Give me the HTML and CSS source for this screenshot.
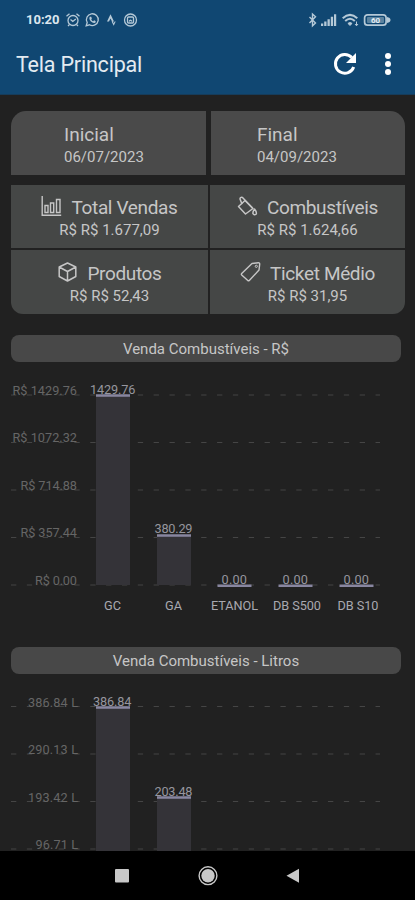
FILE: index.html
```
<!DOCTYPE html>
<html lang="pt-BR">
<head>
    <meta charset="utf-8">
    <meta name="viewport" content="width=device-width, initial-scale=1.0">
    <title>Tela Principal</title>
    <link rel="stylesheet" href="styles.css">
</head>
<body>
<header class="header">
    <div class="status">
        <span class="clock">10:20</span>
        <svg class="status-left" width="74" height="16" viewBox="0 0 74 16">
            <g fill="none" stroke="currentColor" stroke-width="1.3">
                <circle cx="8" cy="8.5" r="5"/>
                <path d="M5.5 7.5l2.3 2 3-2.4M1.5 4.3l3-2.5M11.5 1.8l3 2.5M4.5 12.5L3 14M11.5 12.5L13 14"/>
                <path d="M21.2 13.8l1-3.3a5.9 5.9 0 1 1 2.3 2.3z"/>
                <circle cx="65.5" cy="8" r="6"/>
                <rect x="62.5" y="5" width="6" height="6" rx="1"/>
                <path d="M64 9.500q1.500-2.500 3 0"/>
            </g>
            <path fill="currentColor" d="M25 4.8c-1.7 1.2.3 6 4.4 6.2 1.2 0 1.8-1.5 1-2l-1.3-.7-.9.9c-1-.4-1.7-1.2-2-2l.7-.8-.7-1.6zM42 9.5l3.5-7.2 3.5 7.2h-2l-1.5-3-1.5 3zM46.6 9.5h1.2l.9 1.8.9-1.8h1.1l-2 4.2z"/>
        </svg>
        <svg class="status-right" width="86" height="16" viewBox="0 0 86 16">
            <path fill="none" stroke="currentColor" stroke-width="1.4" d="M3.500 5l6 6-3 2.8V2l3 2.8-6 6.2"/>
            <path fill="currentColor" d="M15 11.5h2.2V14H15zM18.200 9.5h2.3V14h-2.3zM21.500 7.2h2.3V14h-2.3zM24.800 4.8h2.3V14h-2.3zM28 2.3h2.2V14H28z"/>
            <g fill="none" stroke="currentColor" stroke-width="2">
                <path d="M36.7 6.2q7.3-6.6 14.6 0M39.2 8.9q4.8-4.4 9.6 0"/>
                <path d="M41.9 11.4q2.1-1.7 4.2 0L44 13.4z" fill="currentColor" stroke-width="1"/>
                <path d="M50.500 9.500v4M49 12l1.5 1.8L52 12" stroke-width="1"/>
                <rect x="58.6" y="2.8" width="21.500" height="10.4" rx="3" stroke-width="1.7"/>
            </g>
            <rect x="61" y="5" width="17" height="6" rx="1" fill="currentColor" opacity=".45"/>
            <path fill="currentColor" d="M81 5q3.500.7 3.500 3T81 11z"/>
            <text class="battery" x="69.500" y="10.8" text-anchor="middle">60</text>
        </svg>
    </div>
    <div class="appbar">
        <h1>Tela Principal</h1>
        <svg width="24" height="24" viewBox="0 0 24 24">
            <path fill="none" stroke="currentColor" stroke-width="3" d="M20.7 15a9.4 9.4 0 1 1-1.9-9.5"/>
            <path fill="currentColor" d="M23 1v10H13z"/>
        </svg>
        <svg class="menu" width="8" height="24" viewBox="0 0 8 24">
            <g fill="currentColor">
                <circle cx="4" cy="4" r="3"/>
                <circle cx="4" cy="12" r="3"/>
                <circle cx="4" cy="20" r="3"/>
            </g>
        </svg>
    </div>
</header>

<main class="content">
    <section class="dates">
        <div class="date">
            <h2>Inicial</h2>
            <p>06/07/2023</p>
        </div>
        <div class="date">
            <h2>Final</h2>
            <p>04/09/2023</p>
        </div>
    </section>

    <section class="totals">
        <div class="total">
            <h2>
                <svg width="21" height="22" viewBox="0 0 21 22">
                    <path fill="none" stroke="currentColor" stroke-width="1.4" d="M1.200 0v19.300h19M4 9.500h3v7H4zM9.500 7h3.200v9.500H9.500zM15.500 3.500h3.500v13h-3.500z"/>
                </svg>
                Total Vendas
            </h2>
            <p>R$ R$ 1.677,09</p>
        </div>
        <div class="total">
            <h2>
                <svg width="21" height="22" viewBox="0 0 21 22">
                    <g fill="none" stroke="currentColor" stroke-width="1.5" stroke-linejoin="round" stroke-linecap="round">
                        <path d="M8 4.500l8 8-7.500 5.500L1.500 10.500z"/>
                        <path d="M4.800 7.500L3 3Q3 .8 5.500 1.500L15 11.500"/>
                        <path d="M17.500 13q2.800 3.500 1.500 5.200-1.700 1.500-3-.5-.5-1.700 1.500-4.700z"/>
                    </g>
                </svg>
                Combustíveis
            </h2>
            <p>R$ R$ 1.624,66</p>
        </div>
        <div class="total">
            <h2>
                <svg width="21" height="22" viewBox="0 0 21 22">
                    <path fill="none" stroke="currentColor" stroke-width="1.5" stroke-linejoin="round" d="M10.500 1l8.300 4v9.500l-8.300 4.500-8.300-4.500V5zM2.200 5l8.300 4.500 8.300-4.500M10.500 9.500v9.500"/>
                </svg>
                Produtos
            </h2>
            <p>R$ R$ 52,43</p>
        </div>
        <div class="total">
            <h2>
                <svg width="21" height="22" viewBox="0 0 21 22">
                    <path fill="none" stroke="currentColor" stroke-width="1.4" stroke-linejoin="round" d="M12 1.500l6.500-.7q1.300 0 1.200 1.300l-.7 6L9.300 18.500q-.8.700-1.500 0L1.700 13q-.7-.7 0-1.500z"/>
                    <circle cx="16.300" cy="4.300" r="1.100" fill="none" stroke="currentColor"/>
                </svg>
                Ticket Médio
            </h2>
            <p>R$ R$ 31,95</p>
        </div>
    </section>

    <h3 class="chart-title">Venda Combustíveis - R$</h3>
    <svg class="chart" width="415" height="285" viewBox="0 362 415 285">
        <path class="grid" d="M11 395H380M11 442.500H380M11 490H380M11 537.500H380M11 585H380"/>
        <g class="bar">
            <rect x="96" y="396" width="34" height="189"/>
            <rect x="157" y="535" width="34" height="50"/>
        </g>
        <path class="cap" d="M96 395.500h34M157 535.500h34M217.500 585.700h34M278.500 585.700h34M339.500 585.700h34"/>
        <g class="axis">
            <text x="12.500" y="394.500" textLength="64.500">R$ 1429.76</text>
            <text x="12.500" y="442" textLength="64.500">R$ 1072.32</text>
            <text x="20.500" y="489.500" textLength="56.500">R$ 714.88</text>
            <text x="20.500" y="537" textLength="56.500">R$ 357.44</text>
            <text x="35" y="584.500" textLength="42">R$ 0.00</text>
        </g>
        <g class="value">
            <text x="90" y="393.500" textLength="45.500">1429.76</text>
            <text x="154.500" y="533" textLength="38">380.29</text>
            <text x="221.500" y="584" textLength="25.500">0.00</text>
            <text x="282.500" y="584" textLength="25.500">0.00</text>
            <text x="343.500" y="584" textLength="25.500">0.00</text>
        </g>
        <g class="name">
            <text x="104" y="610" textLength="17">GC</text>
            <text x="165" y="610" textLength="17">GA</text>
            <text x="211" y="610" textLength="47">ETANOL</text>
            <text x="273" y="610" textLength="48">DB S500</text>
            <text x="337.500" y="610" textLength="41">DB S10</text>
        </g>
    </svg>

    <h3 class="chart-title">Venda Combustíveis - Litros</h3>
    <svg class="chart" width="415" height="177" viewBox="0 674 415 177">
        <path class="grid" d="M11 706.500H380M11 754H380M11 801.500H380M11 849H380"/>
        <g class="bar">
            <rect x="96" y="708" width="34" height="150"/>
            <rect x="157" y="798" width="34" height="60"/>
        </g>
        <path class="cap" d="M96 707.500h34M157 797.500h34"/>
        <g class="axis">
            <text x="28" y="706.500" textLength="50">386.84 L</text>
            <text x="28" y="754" textLength="50">290.13 L</text>
            <text x="28" y="801.500" textLength="50">193.42 L</text>
            <text x="35.500" y="849" textLength="42.500">96.71 L</text>
        </g>
        <g class="value">
            <text x="93" y="705.500" textLength="38.500">386.84</text>
            <text x="154.500" y="795.500" textLength="38">203.48</text>
        </g>
    </svg>
</main>

<nav class="navbar">
    <svg width="415" height="49" viewBox="0 851 415 49">
        <g fill="#c8c8c8">
            <rect x="115" y="869" width="14" height="13.500" rx="1"/>
            <circle cx="208" cy="875.700" r="6.700"/>
            <path d="M286.500 875.700l12.500-7v14z"/>
        </g>
        <circle cx="208" cy="875.700" r="8.900" fill="none" stroke="#c8c8c8" stroke-width="1.400"/>
    </svg>
</nav>
</body>
</html>
```
FILE: styles.css
```
* {
    box-sizing: border-box;
    margin: 0;
    padding: 0;
}
body {
    display: flex;
    flex-direction: column;
    height: 900px;
    overflow: hidden;
    background-color: #212121;
    color: #c6c6c6;
    font-family: Roboto, sans-serif;
}
svg {
    display: block;
    flex: none;
}

/* top bars */
.header {
    height: 95px;
    flex: none;
    background-color: #104772;
    border-bottom: 1px solid #163c5a;
}
.status {
    display: flex;
    align-items: center;
    height: 39px;
    padding: 0 23px 0 26px;
    color: #b5c9d7;
}
.clock {
    width: 39px;
    color: #dce6ee;
    font-size: 13px;
    font-weight: 700;
}
.status-right {
    margin-left: auto;
}
.battery {
    fill: #e6eef4;
    font-size: 8px;
    font-weight: 700;
}
.appbar {
    display: flex;
    align-items: center;
    height: 50px;
    padding: 0 23px 0 16px;
    color: #fff;
}
.appbar h1 {
    flex: 1;
    color: #e4ebf1;
    font-size: 21.5px;
    font-weight: 400;
    letter-spacing: -0.2px;
}
.menu {
    margin-left: 27px;
}

/* cards */
.content {
    flex: 1;
    min-height: 0;
    overflow: hidden;
    padding-top: 16px;
}
.dates, .totals {
    display: grid;
    padding: 0 10px 0 11px;
}
.dates {
    grid-template-columns: 195px 194px;
    gap: 5px;
    margin-bottom: 10px;
}
.date {
    height: 64px;
    padding: 12px 0 0 53px;
    background-color: #4a4a4a;
}
.date:last-child {
    padding-left: 46px;
}
.date:first-child {
    border-top-left-radius: 15px;
}
.date:last-child {
    border-top-right-radius: 15px;
}
h2 {
    height: 24px;
    font-size: 19px;
    font-weight: 400;
    line-height: 24px;
}
.date p, .total p {
    font-size: 15px;
    line-height: 21px;
}
.totals {
    grid-template-columns: 197px 195px;
    grid-template-rows: 63px 64px;
    gap: 2px;
    margin-bottom: 21px;
}
.total {
    padding-top: 11px;
    background-color: #454746;
    text-align: center;
}
.total h2 {
    display: flex;
    justify-content: center;
    gap: 9px;
    letter-spacing: -0.35px;
}
.total:nth-child(n+3) {
    padding-top: 12px;
}
.total:nth-child(3) {
    border-bottom-left-radius: 12px;
}
.total:nth-child(4) {
    border-bottom-right-radius: 12px;
}

/* charts */
.chart-title {
    height: 27px;
    margin: 0 14px 0 11px;
    border-radius: 8px;
    background-color: #484848;
    font-size: 15px;
    font-weight: 400;
    line-height: 28px;
    text-align: center;
}
.chart {
    font-size: 12.7px;
}
.grid {
    fill: none;
    stroke: #454545;
    stroke-width: 1;
    stroke-dasharray: 5.3 10.55;
}
.bar {
    fill: #343338;
}
.cap {
    fill: none;
    stroke: #8886a0;
    stroke-width: 2.5;
}
.axis {
    fill: #666;
}
.value {
    fill: #96969e;
}
.name {
    fill: #a8a8b0;
    font-size: 12.7px;
}

.navbar {
    height: 49px;
    flex: none;
    background-color: #000;
}
```
